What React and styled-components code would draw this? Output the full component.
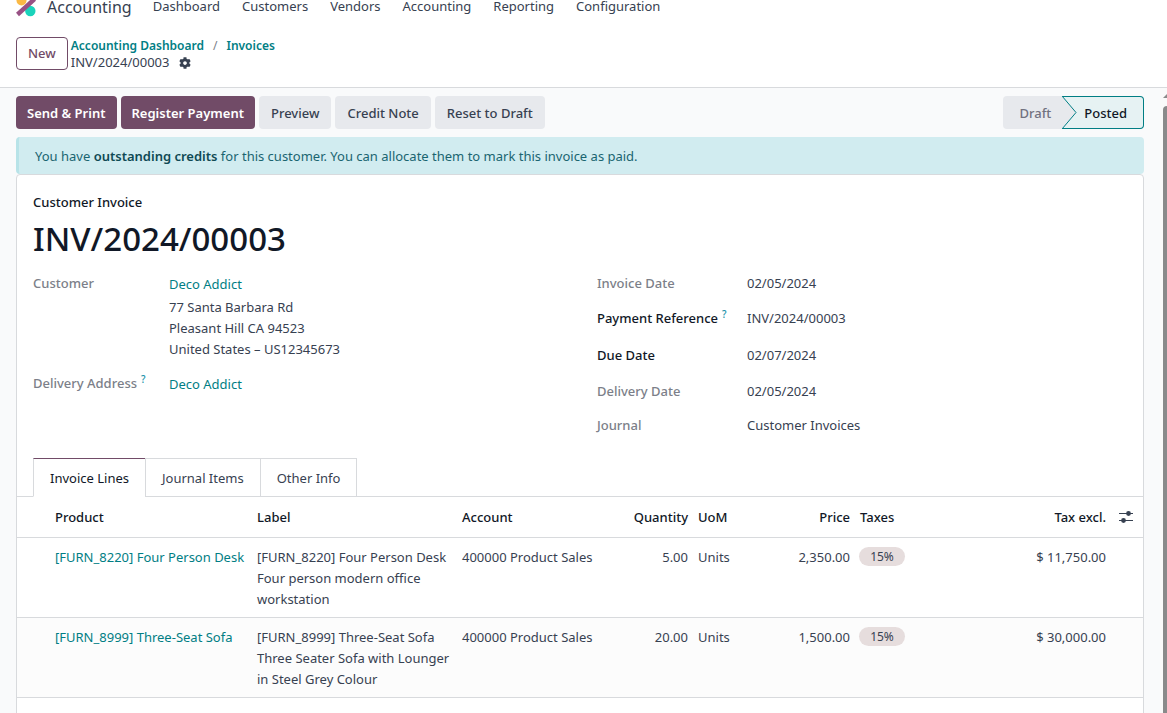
import React from "react";
import styled, { createGlobalStyle } from "styled-components";
import { FaCog } from "react-icons/fa";

const c = {
  plum: "#714b67",
  teal: "#017e84",
  text: "#374151",
  dark: "#111827",
  muted: "#7c7f89",
  line: "#d8dadd",
  grey: "#e7e9ed",
};

const GlobalStyle = createGlobalStyle`
  *, *::before, *::after { box-sizing: border-box; }
  html, body, #root { height: 100%; }
  body {
    margin: 0;
    overflow: hidden;
    background: #fff;
    color: ${c.text};
    font: 400 13px/21px "Noto Sans", "Open Sans", sans-serif;
  }
  button { font: inherit; cursor: pointer; }
  a { color: ${c.teal}; text-decoration: none; }
  h1, h2, dl, dd, p { margin: 0; }
`;

const Screen = styled.div`
  display: flex;
  flex-direction: column;
  height: 100vh;
`;

const Navbar = styled.nav`
  display: flex;
  align-items: flex-start;
  height: 19px;
  flex: none;
  padding: 0 16px;
`;

const Brand = styled.a`
  display: flex;
  align-items: flex-start;
  gap: 11px;
  margin-right: 21px;
  color: ${c.text};
  font-size: 16px;
  line-height: 14px;
`;

const NavLinks = styled.div`
  display: flex;
  gap: 22px;
  a { color: ${c.text}; line-height: 13px; }
`;

const ControlPanel = styled.header`
  display: flex;
  align-items: center;
  gap: 3px;
  flex: none;
  height: 69px;
  padding: 0 16px;
  border-bottom: 1px solid ${c.line};
`;

const NewButton = styled.button`
  height: 33px;
  padding: 1px 11px 0;
  color: ${c.plum};
  font-weight: 500;
  background: #fff;
  border: 1px solid ${c.plum};
  border-radius: 4px;
`;

const Crumbs = styled.div`
  padding-top: 2px;
  line-height: 17px;
`;

const Trail = styled.div`
  font-size: 12px;
  font-weight: 600;
`;

const Slash = styled.span`
  margin: 0 9px;
  color: ${c.muted};
  font-weight: 400;
`;

const Current = styled.div`
  display: flex;
  align-items: center;
  gap: 10px;
`;

const IconButton = styled.button`
  display: inline-flex;
  padding: 0;
  color: ${c.text};
  background: none;
  border: 0;
`;

const Body = styled.div`
  display: flex;
  flex: 1;
  min-height: 0;
  background: #f9fafb;
`;

const Content = styled.main`
  flex: 1;
  min-width: 0;
  overflow: hidden;
  padding: 8px 16px 0;
`;

const ScrollTrack = styled.div`
  flex: none;
  width: 7px;
  padding: 6px 0 0 3px;
  background: #fafafa;
  svg { display: block; }
`;

const ScrollThumb = styled.div`
  height: 100%;
  margin-top: 8px;
  background: #8a8a8a;
  border-top-left-radius: 4px;
`;

const Toolbar = styled.div`
  display: flex;
  justify-content: space-between;
  margin-bottom: 8px;
`;

const Actions = styled.div`
  display: flex;
  gap: 4px;
`;

const Action = styled.button`
  height: 33px;
  padding: ${(p) => (p.$primary ? "2px 11px 0" : "2px 12px 0")};
  border: 0;
  border-radius: 4px;
  color: ${(p) => (p.$primary ? "#fff" : c.text)};
  background: ${(p) => (p.$primary ? c.plum : c.grey)};
  font-weight: ${(p) => (p.$primary ? 600 : 500)};
`;

const StatusBar = styled.div`
  display: flex;
`;

const Stage = styled.button`
  position: relative;
  height: 33px;
  font-weight: 500;
  color: ${(p) => (p.$current ? c.dark : "#71717f")};
  background: ${(p) => (p.$current ? "#e6f2f3" : c.grey)};
  border: ${(p) => (p.$current ? `1px solid ${c.teal}` : "0")};
  border-left: 0;
  border-radius: ${(p) => (p.$current ? "0 4px 4px 0" : "4px 0 0 4px")};
  padding: ${(p) => (p.$current ? "2px 16px 0 22px" : "2px 11px 0 16px")};
  svg { position: absolute; left: 0; top: -1px; }
`;

const Alert = styled.div`
  height: 37px;
  padding: 9px 16px 7px;
  color: #1a6570;
  background: #d1ecf0;
  border-left: 3px solid #b8e3e8;
  border-radius: 4px;
  strong { color: #0f4a54; font-weight: 600; }
`;

const Sheet = styled.section`
  min-height: 600px;
  background: #fff;
  border: 1px solid ${c.line};
  border-radius: 4px;
`;

const SheetHead = styled.div`
  padding: 17px 16px 0;
`;

const Kind = styled.p`
  color: ${c.dark};
  font-weight: 500;
`;

const Title = styled.h1`
  padding-bottom: 2px;
  color: ${c.dark};
  font-size: 33px;
  font-weight: 500;
  line-height: 51px;
`;

const Groups = styled.div`
  display: grid;
  grid-template-columns: 1fr 1fr;
  gap: 34px;
`;

const Fields = styled.dl`
  padding-bottom: 16px;
`;

const Field = styled.div`
  display: grid;
  grid-template-columns: ${(p) => p.$label}px 1fr;
  min-height: ${(p) => (p.$tall ? 37 : 34)}px;
  align-items: ${(p) => (p.$top ? "start" : "center")};
  padding: ${(p) => (p.$top ? "7px 0 6px" : "0")};
  dd { padding-top: ${(p) => (p.$top ? 1 : 0)}px; }
`;

const Term = styled.dt`
  color: ${(p) => (p.$strong ? c.dark : c.muted)};
  font-weight: 500;
  sup {
    margin-left: 4px;
    color: #1691a8;
    font-size: 10px;
    font-weight: 500;
    line-height: 0;
  }
`;

const Address = styled.div`
  margin-top: 2px;
`;

const Tabs = styled.div`
  display: flex;
  padding: 0 16px;
  box-shadow: inset 0 -1px ${c.line};
`;

const Tab = styled.button`
  height: 39px;
  padding: 2px 16px 0;
  margin-left: ${(p) => (p.$active ? "0" : "-1px")};
  color: ${(p) => (p.$active ? c.dark : c.text)};
  background: #fff;
  border: 1px solid ${c.line};
  border-top-color: ${(p) => (p.$active ? c.plum : c.line)};
  border-bottom-color: ${(p) => (p.$active ? "#fff" : c.line)};
`;

const Lines = styled.table`
  width: 100%;
  table-layout: fixed;
  border-collapse: separate;
  border-spacing: 0;
  tbody tr:nth-child(even) { background: #fcfcfc; }
`;

const Col = styled.col`
  width: ${(p) => (p.$w ? `${p.$w}px` : "auto")};
`;

const Th = styled.th`
  height: 41px;
  padding: ${(p) => (p.$icon ? "2px 0 0 8px" : "0 5px")};
  color: ${c.dark};
  font-weight: 500;
  text-align: ${(p) => (p.$right ? "right" : "left")};
  border-bottom: 1px solid ${c.line};
  svg { display: block; }
`;

const Td = styled.td`
  padding: 9px 5px 7px;
  vertical-align: top;
  text-align: ${(p) => (p.$right ? "right" : "left")};
  border-bottom: 1px solid ${c.line};
  white-space: ${(p) => (p.$wrap ? "normal" : "nowrap")};
`;

const Tag = styled.span`
  display: block;
  width: 46px;
  margin-left: -1px;
  line-height: 19px;
  font-size: 12px;
  text-align: center;
  background: #e6dddd;
  border-radius: 10px;
`;

const rows = [
  ["[FURN_8220] Four Person Desk", "Four person modern office workstation", "5.00", "2,350.00", "$ 11,750.00"],
  ["[FURN_8999] Three-Seat Sofa", "Three Seater Sofa with Lounger in Steel Grey Colour", "20.00", "1,500.00", "$ 30,000.00"],
];

const details = [
  { name: "Invoice Date", value: "02/05/2024" },
  { name: "Payment Reference", value: "INV/2024/00003", strong: true, tall: true, help: true },
  { name: "Due Date", value: "02/07/2024", strong: true, tall: true },
  { name: "Delivery Date", value: "02/05/2024" },
  { name: "Journal", value: "Customer Invoices" },
];

const Logo = () => (
  <svg width="20" height="17" viewBox="0 0 20 17" aria-hidden="true">
    <circle cx="5.5" cy="0.5" r="5" fill="#fbb945" />
    <circle cx="14.3" cy="11" r="5.2" fill="#1ad3bb" />
    <path d="M1.5 14.5 18.5 -1" stroke="#985184" strokeWidth="4.4" />
  </svg>
);

const Sliders = () => (
  <svg width="14" height="12" viewBox="0 0 14 12" aria-hidden="true">
    <path d="M0 2.5h14M0 9.5h14" stroke={c.text} strokeWidth="1.2" />
    <circle cx="9.5" cy="2.5" r="2.4" fill={c.text} />
    <circle cx="4.5" cy="9.5" r="2.4" fill={c.text} />
  </svg>
);

export default function App() {
  return (
    <Screen>
      <GlobalStyle />
      <Navbar>
        <Brand href="#"><Logo />Accounting</Brand>
        <NavLinks>
          {["Dashboard", "Customers", "Vendors", "Accounting", "Reporting", "Configuration"].map((n) => (
            <a href="#" key={n}>{n}</a>
          ))}
        </NavLinks>
      </Navbar>
      <ControlPanel>
        <NewButton>New</NewButton>
        <Crumbs>
          <Trail><a href="#">Accounting Dashboard</a><Slash>/</Slash><a href="#">Invoices</a></Trail>
          <Current>INV/2024/00003<IconButton aria-label="Settings"><FaCog size={12} /></IconButton></Current>
        </Crumbs>
      </ControlPanel>
      <Body>
        <Content>
          <Toolbar>
            <Actions>
              <Action $primary>Send &amp; Print</Action>
              <Action $primary>Register Payment</Action>
              <Action>Preview</Action>
              <Action>Credit Note</Action>
              <Action>Reset to Draft</Action>
            </Actions>
            <StatusBar>
              <Stage>Draft</Stage>
              <Stage $current>
                <svg width="15" height="33" viewBox="0 0 15 33" aria-hidden="true">
                  <path d="M0 0 14 16.5 0 33Z" fill={c.grey} />
                  <path d="M0 0 14 16.5 0 33" fill="none" stroke={c.teal} />
                </svg>
                Posted
              </Stage>
            </StatusBar>
          </Toolbar>
          <Alert>
            You have <strong>outstanding credits</strong> for this customer. You can allocate them to mark this invoice as paid.
          </Alert>
          <Sheet>
            <SheetHead>
              <Kind>Customer Invoice</Kind>
              <Title>INV/2024/00003</Title>
              <Groups>
                <Fields>
                  <Field $label={136} $top>
                    <Term>Customer</Term>
                    <dd>
                      <a href="#">Deco Addict</a>
                      <Address>77 Santa Barbara Rd<br />Pleasant Hill CA 94523<br />United States – US12345673</Address>
                    </dd>
                  </Field>
                  <Field $label={136} $top>
                    <Term>Delivery Address<sup>?</sup></Term>
                    <dd><a href="#">Deco Addict</a></dd>
                  </Field>
                </Fields>
                <Fields>
                  {details.map((d) => (
                    <Field key={d.name} $label={150} $tall={d.tall}>
                      <Term $strong={d.strong}>{d.name}{d.help && <sup>?</sup>}</Term>
                      <dd>{d.value}</dd>
                    </Field>
                  ))}
                </Fields>
              </Groups>
            </SheetHead>
            <Tabs role="tablist">
              <Tab role="tab" aria-selected="true" $active>Invoice Lines</Tab>
              <Tab role="tab" aria-selected="false">Journal Items</Tab>
              <Tab role="tab" aria-selected="false">Other Info</Tab>
            </Tabs>
            <Lines>
              <colgroup>
                {[33, 202, 205, 146, 90, 72, 90, 0, 120, 32].map((w, i) => <Col key={i} $w={w} />)}
              </colgroup>
              <thead>
                <tr>
                  <Th />
                  <Th>Product</Th>
                  <Th>Label</Th>
                  <Th>Account</Th>
                  <Th $right>Quantity</Th>
                  <Th>UoM</Th>
                  <Th $right>Price</Th>
                  <Th>Taxes</Th>
                  <Th $right>Tax excl.</Th>
                  <Th $icon><IconButton aria-label="Optional columns"><Sliders /></IconButton></Th>
                </tr>
              </thead>
              <tbody>
                {rows.map(([product, description, qty, price, total]) => (
                  <tr key={product}>
                    <Td />
                    <Td><a href="#">{product}</a></Td>
                    <Td $wrap>{product}<br />{description}</Td>
                    <Td>400000 Product Sales</Td>
                    <Td $right>{qty}</Td>
                    <Td>Units</Td>
                    <Td $right>{price}</Td>
                    <Td><Tag>15%</Tag></Td>
                    <Td $right>{total}</Td>
                    <Td />
                  </tr>
                ))}
              </tbody>
            </Lines>
          </Sheet>
        </Content>
        <ScrollTrack aria-hidden="true">
          <svg width="4" height="4" viewBox="0 0 4 4"><path d="M0 4 4 0V4Z" fill="#8a8a8a" /></svg>
          <ScrollThumb />
        </ScrollTrack>
      </Body>
    </Screen>
  );
}
